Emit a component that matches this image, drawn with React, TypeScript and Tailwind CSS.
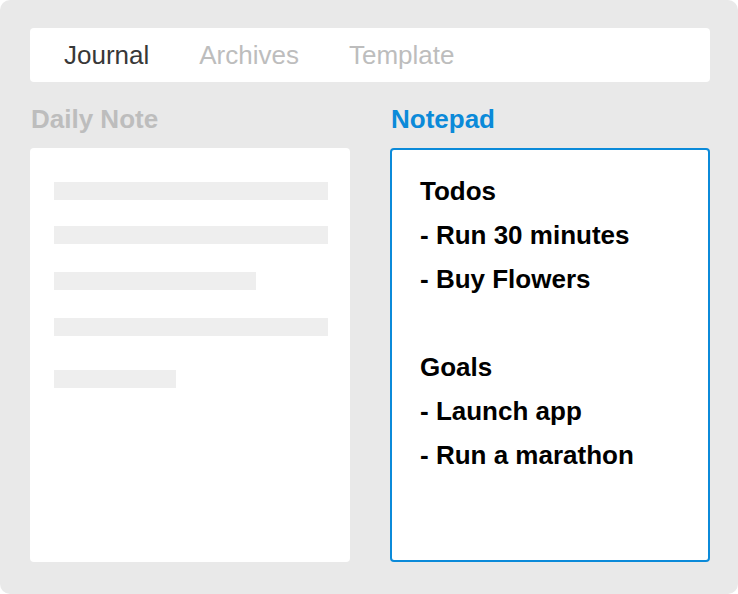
const TABS = [
  { label: "Journal", active: true },
  { label: "Archives", active: false },
  { label: "Template", active: false },
];

// placeholder lines in the daily note card
const BARS = [
  { w: "w-[274px]", mt: "mt-0" },
  { w: "w-[274px]", mt: "mt-[26px]" },
  { w: "w-[202px]", mt: "mt-[28px]" },
  { w: "w-[274px]", mt: "mt-[28px]" },
  { w: "w-[122px]", mt: "mt-[34px]" },
];

const NOTES = ["Todos", "- Run 30 minutes", "- Buy Flowers", "", "Goals", "- Launch app", "- Run a marathon"];

export default function App() {
  return (
    <div
      className="w-[738px] h-[594px] bg-[#e9e9e9] rounded-[10px] pl-[30px] pr-[28px] pt-[28px]"
      style={{ fontFamily: '"Liberation Sans", Arial, sans-serif' }}
    >
      {/* Tabs */}
      <div className="h-[54px] bg-white rounded-[4px] flex items-center pl-[34px] gap-[50px] text-[26px]">
        {TABS.map((t) => (
          <span key={t.label} className={t.active ? "text-[#383838]" : "text-[#bdbdbd]"}>
            {t.label}
          </span>
        ))}
      </div>

      <div className="grid grid-cols-2 gap-[40px]">
        {/* Daily Note */}
        <div>
          <div className="pt-[22px] pb-[14px] leading-[30px] text-[26px] font-bold text-[#bdbdbd] pl-px">
            Daily Note
          </div>
          <div className="h-[414px] bg-white rounded-[4px] pt-[34px] pl-[24px]">
            {BARS.map((b, i) => (
              <div key={i} className={`h-[18px] bg-[#eeeeee] ${b.w} ${b.mt}`} />
            ))}
          </div>
        </div>

        {/* Notepad */}
        <div>
          <div className="pt-[22px] pb-[14px] leading-[30px] text-[26px] font-bold text-[#0b8ad9] pl-px">
            Notepad
          </div>
          <div className="h-[414px] bg-white rounded-[4px] border-2 border-[#0b8ad9] pt-[19px] pl-[28px]">
            {NOTES.map((n, i) => (
              <div key={i} className="h-[44px] leading-[44px] text-[26px] font-bold text-black">
                {n}
              </div>
            ))}
          </div>
        </div>
      </div>
    </div>
  );
}
